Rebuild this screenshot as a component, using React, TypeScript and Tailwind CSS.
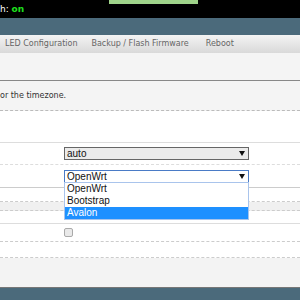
import React from 'react';

const Arrow = () => (
  <svg width="6" height="5" viewBox="0 0 6 5" className="shrink-0">
    <path d="M0 0h6L3 5z" fill="#111" />
  </svg>
);

const options = ['OpenWrt', 'Bootstrap', 'Avalon'];

export default function App() {
  return (
    <div className="w-[300px] h-[300px] overflow-hidden bg-white font-['DejaVu_Sans',sans-serif]">
      {/* Top status bar */}
      <div className="h-[18px] bg-black flex items-start">
        <div className="pt-[3px] text-[9px] leading-[12px] text-white whitespace-nowrap">
          h: <span className="text-[#1ee01e] font-bold">on</span>
        </div>
        <div className="ml-[85px] w-[89px] h-[4px] bg-[#9fd38a]" />
      </div>

      {/* Menu bar */}
      <div className="h-[17px] bg-[#4b6a7b]" />

      {/* Tabs */}
      <div className="h-[18px] bg-gradient-to-b from-[#f4f4f4] to-[#d9d9d9] flex items-center gap-[14px] pl-[5px] text-[8px] text-[#666] whitespace-nowrap">
        <span>LED Configuration</span>
        <span>Backup / Flash Firmware</span>
        <span className="ml-[3px]">Reboot</span>
      </div>

      {/* Section header */}
      <div className="h-[28px] bg-[#f4f4f4] border-b border-[#888]" />
      <div className="h-[30px] bg-[#f4f4f4] border-b border-dashed border-[#bbb] flex items-center text-[8px] text-[#333] whitespace-nowrap">
        or the timezone.
      </div>

      <div className="h-[32px] border-b border-[#ddd]" />

      {/* Row: auto */}
      <div className="h-[22px] border-b border-dashed border-[#ddd] pl-[64px] pt-[4px]">
        <div className="w-[185px] h-[13px] bg-[#ebebeb] border border-[#666] flex items-center justify-between pl-[2px] pr-[3px] font-['Liberation_Sans',sans-serif] text-[10px] text-[#111]">
          <span>auto</span>
          <Arrow />
        </div>
      </div>

      {/* Row: firmware select (open) */}
      <div className="h-[23px] border-b border-[#ccc] pl-[64px] pt-[5px]">
        <div className="relative w-[185px]">
          <div className="h-[13px] bg-white border border-[#4a7bc6] flex items-center justify-between pl-[2px] pr-[3px] font-['Liberation_Sans',sans-serif] text-[10px] text-[#111]">
            <span>OpenWrt</span>
            <Arrow />
          </div>
          <div className="absolute left-0 top-[12px] w-[185px] bg-white border border-[#a9c4ec] z-10 font-['Liberation_Sans',sans-serif] text-[10px] leading-[12px] text-[#111]">
            {options.map((o) => (
              <div key={o} className={o === 'Avalon' ? 'h-[12px] pl-[2px] bg-[#1e90ff] text-white' : 'h-[12px] pl-[2px]'}>
                {o}
              </div>
            ))}
          </div>
        </div>
      </div>

      <div className="h-[14px] border-b border-dashed border-[#ccc]" />
      <div className="h-[9px] bg-[#f0f0f0] border-b border-dashed border-[#ccc]" />
      <div className="h-[13px] border-b border-[#ddd]" />

      {/* Row: checkbox */}
      <div className="h-[18px] border-b border-dashed border-[#ccc] pl-[64px] pt-[4px]">
        <div className="w-[9px] h-[9px] rounded-[2px] border border-[#aaa] bg-[#e9e9e9]" />
      </div>

      <div className="h-[16px] border-b border-dashed border-[#ccc]" />
      <div className="h-[30px] bg-[#f3f3f3] border-b border-[#777]" />

      {/* Footer */}
      <div className="h-[20px] bg-[#4b6a7b]" />
    </div>
  );
}
